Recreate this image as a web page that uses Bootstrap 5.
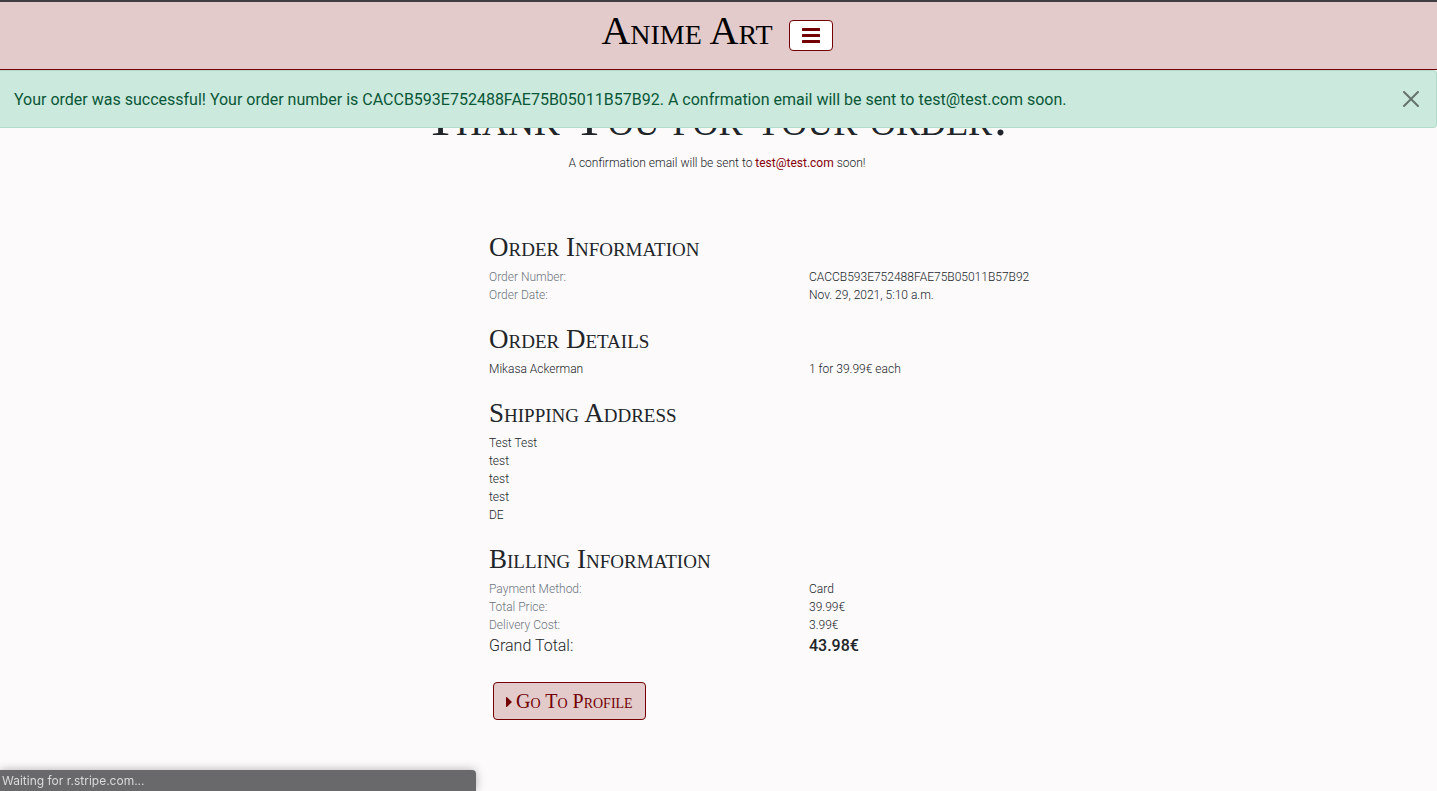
<!DOCTYPE html>
<html lang="en">
<head>
<meta charset="utf-8">
<meta name="viewport" content="width=device-width, initial-scale=1">
<title>Anime Art - Order Confirmation</title>
<link href="https://cdn.jsdelivr.net/npm/bootstrap@5.3.0/dist/css/bootstrap.min.css" rel="stylesheet">
<style>
  :root { --wine: #720004; --blush: #e4cbcb; }
  body { font-family: Roboto, sans-serif; font-weight: 300; font-size: 12px; line-height: 18px; background: #fcfafb; color: #212529; padding-right: 3px; }
  .display-caps { font-family: "Liberation Serif", serif; font-variant: small-caps; font-weight: 400; }
  .site-bar { height: 70px; background: var(--blush); border-top: 2px solid #403d42; border-bottom: 1px solid var(--wine); padding: 18px 3px 0 0; }
  .site-name { font-size: 40px; line-height: 22px; color: #000; }
  .menu-toggle { width: 44px; height: 31px; background: #fff; border: 1px solid var(--wine); border-radius: 4px; }
  .order-alert { top: 70px; font-size: 16px; line-height: 24px; font-weight: 400; padding: 17px 48px 15px 14px; background: #cbe9dc; border-color: #b2dcc9; border-left: 0; border-radius: 0 4px 4px 0; color: #0a5738; }
  .order-alert .btn-close { padding: 20px 17px; }
  .order-page { padding-top: 94px; max-width: 960px; }
  .thanks { font-size: 51px; line-height: 48px; margin-bottom: 12px; }
  .order-page h2 { font-size: 27px; line-height: 22px; margin: 0 0 10px; }
  .order-page section { margin-bottom: 24px; }
  .wine-link { color: #85000a; text-decoration: none; font-weight: 400; }
  .field-name { color: #6c757d; }
  .grand { font-size: 16px; line-height: 24px; }
  .grand-sum { font-weight: 500; }
  .profile-btn { background: var(--blush); color: var(--wine); border: 1px solid var(--wine); border-radius: 4px; font-size: 20px; line-height: 24px; padding: 6px 12px; margin-left: 4px; }
  .profile-btn:hover { background: var(--wine); color: #fff; }
  .browser-status { width: 476px; max-width: 100%; height: 21px; background: #69696b; color: #d9dadd; font: 400 12px/21px Inter, sans-serif; padding-left: 2px; border-top-right-radius: 4px; box-shadow: 0 0 10px rgba(0,0,0,.3); }
</style>
</head>
<body>
<nav class="site-bar fixed-top d-flex align-items-start justify-content-center">
  <a class="site-name display-caps text-decoration-none me-3" href="#">Anime Art</a>
  <button class="menu-toggle d-flex align-items-center justify-content-center p-0" type="button" aria-label="Menu">
    <svg width="18" height="16" viewBox="0 0 18 16" fill="#720004"><rect width="18" height="3" rx="0.5"/><rect y="6" width="18" height="3" rx="0.5"/><rect y="12" width="18" height="3" rx="0.5"/></svg>
  </button>
</nav>

<div class="order-alert alert fixed-top mb-0 alert-dismissible" role="alert">
  Your order was successful! Your order number is CACCB593E752488FAE75B05011B57B92. A confrmation email will be sent to test@test.com soon.
  <button type="button" class="btn-close" data-bs-dismiss="alert" aria-label="Close"></button>
</div>

<main class="order-page container">
  <header class="text-center mb-5 pb-3">
    <h1 class="thanks display-caps">Thank You for your order!</h1>
    <p class="mb-0">A confirmation email will be sent to <a class="wine-link" href="mailto:test@test.com">test@test.com</a> soon!</p>
  </header>

  <section>
    <div class="row"><div class="col-9 offset-3"><h2 class="display-caps">Order Information</h2></div></div>
    <div class="row"><div class="col-4 offset-3 field-name">Order Number:</div><div class="col-5">CACCB593E752488FAE75B05011B57B92</div></div>
    <div class="row"><div class="col-4 offset-3 field-name">Order Date:</div><div class="col-5">Nov. 29, 2021, 5:10 a.m.</div></div>
  </section>

  <section>
    <div class="row"><div class="col-9 offset-3"><h2 class="display-caps">Order Details</h2></div></div>
    <div class="row"><div class="col-4 offset-3">Mikasa Ackerman</div><div class="col-5">1 for 39.99€ each</div></div>
  </section>

  <section>
    <div class="row"><div class="col-9 offset-3">
      <h2 class="display-caps">Shipping Address</h2>
      <div>Test Test<br>test<br>test<br>test<br>DE</div>
    </div></div>
  </section>

  <section>
    <div class="row"><div class="col-9 offset-3"><h2 class="display-caps">Billing Information</h2></div></div>
    <div class="row"><div class="col-4 offset-3 field-name">Payment Method:</div><div class="col-5">Card</div></div>
    <div class="row"><div class="col-4 offset-3 field-name">Total Price:</div><div class="col-5">39.99€</div></div>
    <div class="row"><div class="col-4 offset-3 field-name">Delivery Cost:</div><div class="col-5">3.99€</div></div>
    <div class="row grand"><div class="col-4 offset-3">Grand Total:</div><div class="col-5 grand-sum">43.98€</div></div>
  </section>

  <div class="row"><div class="col-9 offset-3">
    <a class="profile-btn display-caps btn" href="#"><svg class="me-1 align-baseline" width="6" height="12" viewBox="0 0 6 12" fill="currentColor"><path d="M0 1.5Q0 .5 1 1.2L5.5 5.4Q6 6 5.5 6.6L1 10.8Q0 11.5 0 10.5Z"/></svg>Go To Profile</a>
  </div></div>
</main>

<div class="browser-status position-fixed bottom-0 start-0">Waiting for r.stripe.com...</div>
<script src="https://cdn.jsdelivr.net/npm/bootstrap@5.3.0/dist/js/bootstrap.bundle.min.js"></script>
</body>
</html>
